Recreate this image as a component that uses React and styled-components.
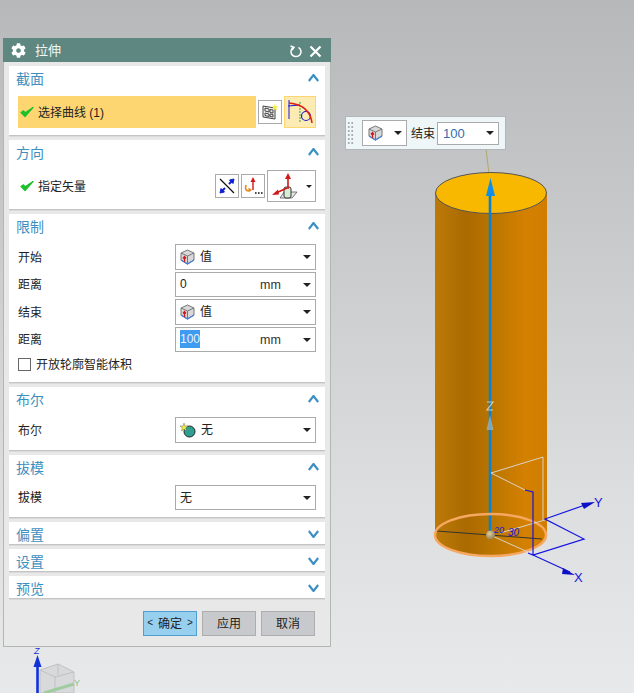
import styled, { createGlobalStyle } from 'styled-components'
import { FaCog } from 'react-icons/fa'

const GlobalStyle = createGlobalStyle`
  html, body {
    margin: 0;
    padding: 0;
  }
  body {
    font-family: 'Liberation Sans', 'Noto Sans CJK SC', sans-serif;
    font-size: 12px;
    color: #222;
  }
`

const Viewport = styled.div`
  position: relative;
  width: 634px;
  height: 693px;
  overflow: hidden;
  padding: 38px 0 0 3px;
  box-sizing: border-box;
  background: linear-gradient(180deg, #b7b8b9 0%, #c9cacb 35%, #dcdddf 70%, #e8e9eb 100%);
`

const Scene = styled.svg`
  position: absolute;
  left: 0;
  top: 0;
`

const Dialog = styled.div`
  position: relative;
  width: 328px;
  height: 609px;
  box-sizing: border-box;
  background: #e8e8e8;
  border: 1px solid #b4b6b6;
  border-top: 0;
  display: flex;
  flex-direction: column;
`

const TitleBar = styled.div`
  height: 24px;
  margin: 0 -1px;
  background: #5d8780;
  color: #fff;
  display: flex;
  align-items: center;
  padding: 0 9px 0 8px;
  gap: 9px;
  font-size: 13px;
  flex-shrink: 0;
`

const TitleText = styled.span`
  flex: 1;
  color: #f2f6f5;
  margin-bottom: 2px;
`

const TitleIcons = styled.div`
  display: flex;
  align-items: center;
  gap: 7px;
  margin-top: 3px;
`

const Sections = styled.div`
  padding: 4px 5px 0 5px;
  display: flex;
  flex-direction: column;
  gap: 4px;
`

const SectionBox = styled.section`
  background: #fff;
  border-bottom: 1px solid #c4c4c4;
  box-shadow: 0 1px 0 #dadada;
  height: ${(p) => p.$height}px;
  box-sizing: border-box;
  display: flex;
  flex-direction: column;
`

const SectionHead = styled.div`
  height: 23px;
  flex-shrink: 0;
  display: flex;
  align-items: center;
  justify-content: space-between;
  padding: 0 6px 0 7px;
  box-sizing: border-box;
  color: #3d8fc0;
  font-size: 14px;
`

const SectionBody = styled.div`
  padding: 7px 9px 0 9px;
  display: flex;
  flex-direction: column;
  gap: 2px;
`

const PickRow = styled.div`
  height: 32px;
  display: flex;
  align-items: center;
  gap: 2px;
`

const PickBar = styled.div`
  flex: 1;
  height: 32px;
  background: #fdd672;
  display: flex;
  align-items: center;
  gap: 4px;
  padding-left: 2px;
`

const PlainLabel = styled.div`
  flex: 1;
  display: flex;
  align-items: center;
  gap: 4px;
  padding-left: 2px;
`

const LabelText = styled.span`
  margin-bottom: 2px;
`

const ToolButton = styled.div`
  width: ${(p) => p.$w || 24}px;
  height: ${(p) => p.$h || 24}px;
  box-sizing: border-box;
  border: 1px solid ${(p) => (p.$active ? '#fdd672' : '#aaa')};
  background: ${(p) => (p.$active ? '#fcecb4' : '#fff')};
  display: flex;
  align-items: center;
  justify-content: center;
  gap: ${(p) => p.$gap || 0}px;
  flex-shrink: 0;
`

const FieldRow = styled.div`
  display: flex;
  align-items: center;
  justify-content: space-between;
  height: ${(p) => p.$h || 26}px;
`

const Select = styled.div`
  width: 141px;
  height: 100%;
  box-sizing: border-box;
  border: 1px solid #aaa;
  background: #fff;
  display: flex;
  align-items: center;
  padding: 0 4px;
  gap: 5px;
  font-size: 12px;
  flex-shrink: 0;
`

const Grow = styled.span`
  flex: 1;
  line-height: 1;
  margin-top: ${(p) => p.$up || 0}px;
`

const Selected = styled.span`
  background: #3f9bf0;
  color: #e8f3ff;
  padding: 2px 0;
`

const Unit = styled.span`
  width: 38px;
  font-size: 12.5px;
  color: #333;
  margin-top: 1px;
`

const Caret = styled.span`
  width: 0;
  height: 0;
  border-left: ${(p) => p.$size || 4}px solid transparent;
  border-right: ${(p) => p.$size || 4}px solid transparent;
  border-top: ${(p) => p.$size || 4}px solid #222;
  flex-shrink: 0;
`

const CheckRow = styled.label`
  display: flex;
  align-items: center;
  gap: 5px;
  margin-top: 1px;
  height: 18px;
`

const CheckBox = styled.span`
  width: 11px;
  height: 11px;
  border: 1px solid #666;
  background: #fff;
`

const Footer = styled.div`
  display: flex;
  justify-content: flex-end;
  gap: 5px;
  padding: 12px 15px 0 0;
`

const DialogButton = styled.div`
  width: 54px;
  height: 25px;
  box-sizing: border-box;
  border: 1px solid ${(p) => (p.$primary ? '#4f9fd0' : '#adadad')};
  background: ${(p) => (p.$primary ? '#97cfee' : '#c8c9cc')};
  display: flex;
  align-items: center;
  justify-content: center;
  gap: 5px;
  padding-bottom: 2px;
  color: #222;
`

const Arrowish = styled.span`
  font-size: 10px;
`

const FloatBar = styled.div`
  position: absolute;
  left: 345px;
  top: 116px;
  width: 161px;
  height: 34px;
  box-sizing: border-box;
  border: 1px solid #b3b6b7;
  background: #eff6f7;
  display: flex;
  align-items: center;
  padding-left: 1px;
  white-space: nowrap;
`

const Grip = styled.div`
  width: 7px;
  height: 25px;
  margin-right: 8px;
  flex-shrink: 0;
  background-image: radial-gradient(circle, #aab0b2 1.2px, transparent 1.3px);
  background-size: 3.5px 4px;
`

const FloatSelect = styled.div`
  width: ${(p) => p.$w}px;
  height: ${(p) => p.$h}px;
  box-sizing: border-box;
  flex-shrink: 0;
  border: 1px solid #aaa;
  background: #fff;
  display: flex;
  align-items: center;
  justify-content: space-between;
  padding: 0 4px 0 5px;
  color: ${(p) => p.$color || '#222'};
  font-size: 13px;
`

const FloatLabel = styled.span`
  margin: 0 2px 2px 4px;
`

const AxisLabel = styled.text`
  font-family: 'Liberation Sans', sans-serif;
  font-size: ${(p) => p.$size}px;
  font-style: ${(p) => (p.$italic ? 'italic' : 'normal')};
  fill: ${(p) => p.$fill};
`

const Tick = () => (
  <svg width="14" height="12" viewBox="0 0 14 12">
    <path d="M1 6.5 L5 10.5 L13 1.5 L5.2 6.8 L3.5 4.8 Z" fill="#1fbf2c" stroke="#1fbf2c" strokeWidth="1.2" strokeLinejoin="round" />
  </svg>
)

const Chevron = ({ down }) => (
  <svg width="11" height="8" viewBox="0 0 11 8">
    <path d={down ? 'M0.8 1 L5.5 7 L10.2 1' : 'M0.8 7 L5.5 1 L10.2 7'} fill="none" stroke="#3a90c2" strokeWidth="2.2" />
  </svg>
)

const ValueCube = () => (
  <svg width="15" height="16" viewBox="0 0 15 16">
    <path d="M7.5 1 L14 4 L14 11 L7.5 15 L1 11 L1 4 Z" fill="#d8d8d8" stroke="#777" strokeWidth="1" />
    <path d="M1 4 L7.5 7 L14 4 M7.5 7 L7.5 15" fill="none" stroke="#777" strokeWidth="1" />
    <path d="M1 11 L7.5 15 L14 11" fill="none" stroke="#4a7fd0" strokeWidth="1.4" />
    <path d="M4.5 13 L4.5 8 M3 9.5 L4.5 7.5 L6 9.5" fill="none" stroke="#d01818" strokeWidth="1.3" />
  </svg>
)

const BoolIcon = () => (
  <svg width="16" height="16" viewBox="0 0 16 16">
    <circle cx="9.5" cy="9.5" r="5.5" fill="#2f9f92" stroke="#222" strokeWidth="1" />
    <path d="M4 1 L5 4 L8 4 L5.8 6 L6.5 9 L4 7.3 L1.5 9 L2.2 6 L0 4 L3 4 Z" fill="#e8e84a" stroke="#555" strokeWidth="0.4" />
  </svg>
)

const CurveIcon = () => (
  <svg width="28" height="28" viewBox="0 0 28 28">
    <path d="M3 2 L3 21 M2 8 L14 7" fill="none" stroke="#1a1ad0" strokeWidth="1" />
    <path d="M14 4 L14 25" fill="none" stroke="#3a9a5a" strokeWidth="1" strokeDasharray="2 1" />
    <circle cx="20" cy="18" r="4.5" fill="none" stroke="#1a1ad0" strokeWidth="1.2" />
    <path d="M3 5 C14 6 24 10 26 25" fill="none" stroke="#e02010" strokeWidth="1.6" />
  </svg>
)

const SketchIcon = () => (
  <svg width="18" height="18" viewBox="0 0 18 18">
    <path d="M2 3 L14 5 L14 16 L2 14 Z" fill="#eee" stroke="#444" strokeWidth="1" />
    <path d="M4 5 L8 6 L8 9 L4 8 Z M9 6.5 L12 7 L12 10 L9 9.5 Z M4 10 L8 11 L8 13.5 L4 12.5 Z M9 11 L12 11.5 L12 14 L9 13.5 Z" fill="none" stroke="#444" strokeWidth="1" />
    <path d="M14 0.5 L15 3 L17.5 3.5 L15.5 5 L16 7.5 L14 6 L12 7.5 L12.5 5 L10.5 3.5 L13 3 Z" fill="#f4ee58" />
  </svg>
)

const ReverseIcon = () => (
  <svg width="18" height="18" viewBox="0 0 18 18">
    <path d="M2 2 L16 16" stroke="#111" strokeWidth="1.2" />
    <path d="M16 2 L11.5 3 L15 6.5 Z M2 16 L6.5 15 L3 11.5 Z" fill="#1020d0" stroke="#1020d0" strokeWidth="1" />
    <path d="M14 4 L11 7 M4 14 L7 11" stroke="#1020d0" strokeWidth="2" />
  </svg>
)

const VectorDialogIcon = () => (
  <svg width="20" height="20" viewBox="0 0 20 20">
    <path d="M10 14 L10 4" stroke="#d01818" strokeWidth="1.4" />
    <path d="M10 1 L7.5 6 L12.5 6 Z" fill="#d01818" />
    <path d="M3 9 C1.5 14 4 16 8 14" fill="none" stroke="#e88a20" strokeWidth="1.6" />
    <path d="M9 14 L5.5 11.5 L5.5 16 Z" fill="#e88a20" />
    <path d="M12 17 h1.6 M15 17 h1.6 M18 17 h1.6" stroke="#111" strokeWidth="1.6" />
  </svg>
)

const VectorIcon = () => (
  <svg width="26" height="28" viewBox="0 0 26 28">
    <path d="M12 20 L25 20 L20 26 L8 26 Z" fill="#e8e8e8" stroke="#555" strokeWidth="0.8" />
    <rect x="12" y="15" width="7" height="11" rx="2" fill="#d8ecd8" stroke="#333" strokeWidth="1" />
    <path d="M16 17 L16 5" stroke="#d01818" strokeWidth="1.6" />
    <path d="M16 1 L13 7 L19 7 Z" fill="#d01818" />
    <path d="M15 16 L4 21" stroke="#d01818" strokeWidth="1.6" />
    <path d="M0 23 L6 17.5 L7 22.5 Z" fill="#d01818" />
  </svg>
)

function Section({ title, height, open = true, children }) {
  return (
    <SectionBox $height={height}>
      <SectionHead>
        <span>{title}</span>
        <Chevron down={!open} />
      </SectionHead>
      {children}
    </SectionBox>
  )
}

function CadScene() {
  return (
    <Scene width="634" height="693" viewBox="0 0 634 693">
      <defs>
        <linearGradient id="body" x1="0" x2="1" y1="0" y2="0">
          <stop offset="0" stopColor="#bb7a08" />
          <stop offset="0.28" stopColor="#ab6a00" />
          <stop offset="0.55" stopColor="#bd7700" />
          <stop offset="0.8" stopColor="#d48000" />
          <stop offset="1" stopColor="#d17d00" />
        </linearGradient>
        <radialGradient id="ball" cx="0.4" cy="0.35" r="0.7">
          <stop offset="0" stopColor="#e0d09c" />
          <stop offset="1" stopColor="#8a7a50" />
        </radialGradient>
      </defs>

      <path d="M486 149 L490 182" stroke="#b3a76a" strokeWidth="1" />
      <path d="M435 193 L435 535 A56 21 0 0 0 547 535 L547 193 Z" fill="url(#body)" />
      <ellipse cx="491" cy="193" rx="55.5" ry="20.5" fill="#f8b800" stroke="#555" strokeWidth="1" />

      <path d="M490 195 L490 533" stroke="#0a80d0" strokeWidth="2.6" />
      <path d="M490.5 178 L486 196 L495 196 Z" fill="#0d8fea" />
      <path d="M490 415 L486.5 430 L493.5 430 Z" fill="#a8c4d8" opacity="0.6" />
      <path d="M487 402 L493 402 L487 410 L493 410" fill="none" stroke="#eadfc8" strokeWidth="1.2" opacity="0.8" />

      <path d="M437 531 L542 539" stroke="#333" strokeWidth="1" />
      <ellipse cx="490.5" cy="535" rx="55.5" ry="21" fill="none" stroke="#f6a860" strokeWidth="2.5" />

      <path d="M491 473 L543 457 L543 520 M491 473 L525 490 M490 535 L528 552 M500 533 L545 520" fill="none" stroke="#d8d4c8" strokeWidth="1" />
      <path d="M525 490 L533 492 L533 555 M528 553 L533 555 L584 539 L545 519 L585 505 M533 555 L570 572" fill="none" stroke="#1414e0" strokeWidth="1.2" />
      <path d="M595 502 L581 503 L584 509 Z" fill="#0d10c8" />
      <path d="M575 575 L563 568 L562 574 Z" fill="#0d10c8" />
      <AxisLabel x="594" y="507" $size={13} $fill="#1414e0">Y</AxisLabel>
      <AxisLabel x="574" y="582" $size={13} $fill="#1414e0">X</AxisLabel>
      <AxisLabel x="494" y="533" $size={9} $italic $fill="#1414e0">20</AxisLabel>
      <AxisLabel x="508" y="536" $size={10} $italic $fill="#1414e0">30</AxisLabel>
      <circle cx="490.5" cy="535" r="4.5" fill="url(#ball)" />

      <path d="M40 670 L58 664 L74 672 L74 693 L40 693 Z" fill="#d8d9da" stroke="#c0c1c2" strokeWidth="1" />
      <path d="M40 670 L55 677 L74 672 M55 677 L55 693 M58 664 L58 675" fill="none" stroke="#c0c1c2" strokeWidth="1" />
      <path d="M37.5 693 L37.5 662" stroke="#1030d8" strokeWidth="2.6" />
      <path d="M37.5 655 L33.5 667 L41.5 667 Z" fill="#1030d8" />
      <AxisLabel x="34" y="654" $size={9} $italic $fill="#1030d8">Z</AxisLabel>
      <path d="M44 693 L74 684" stroke="#9fcca0" strokeWidth="3" />
      <AxisLabel x="74" y="686" $size={9} $fill="#8cc08c">Y</AxisLabel>
    </Scene>
  )
}

export default function App() {
  return (
    <>
      <GlobalStyle />
      <Viewport>
        <CadScene />
        <Dialog>
          <TitleBar>
            <FaCog size={15} />
            <TitleText>拉伸</TitleText>
            <TitleIcons>
              <svg width="13" height="13" viewBox="0 0 13 13">
                <path d="M4 2.6 A5 5 0 1 0 9.5 2.3 M1.5 1 L5 2.4 L3 5" fill="none" stroke="#fff" strokeWidth="1.5" />
              </svg>
              <svg width="13" height="13" viewBox="0 0 13 13">
                <path d="M1.5 1.5 L11.5 11.5 M11.5 1.5 L1.5 11.5" stroke="#fff" strokeWidth="2.2" />
              </svg>
            </TitleIcons>
          </TitleBar>

          <Sections>
            <Section title="截面" height={70}>
              <SectionBody>
                <PickRow>
                  <PickBar>
                    <Tick />
                    <LabelText>选择曲线 (1)</LabelText>
                  </PickBar>
                  <ToolButton>
                    <SketchIcon />
                  </ToolButton>
                  <ToolButton $active $w={32} $h={32}>
                    <CurveIcon />
                  </ToolButton>
                </PickRow>
              </SectionBody>
            </Section>

            <Section title="方向" height={70}>
              <SectionBody>
                <PickRow>
                  <PlainLabel>
                    <Tick />
                    <LabelText>指定矢量</LabelText>
                  </PlainLabel>
                  <ToolButton>
                    <ReverseIcon />
                  </ToolButton>
                  <ToolButton>
                    <VectorDialogIcon />
                  </ToolButton>
                  <ToolButton $w={49} $h={32} $gap={8}>
                    <VectorIcon />
                    <Caret $size={3} />
                  </ToolButton>
                </PickRow>
              </SectionBody>
            </Section>

            <Section title="限制" height={169}>
              <SectionBody>
                <FieldRow>
                  <LabelText>开始</LabelText>
                  <Select>
                    <ValueCube />
                    <Grow>值</Grow>
                    <Caret />
                  </Select>
                </FieldRow>
                <FieldRow $h={25}>
                  <LabelText>距离</LabelText>
                  <Select>
                    <Grow $up={-2}>0</Grow>
                    <Unit>mm</Unit>
                    <Caret />
                  </Select>
                </FieldRow>
                <FieldRow>
                  <LabelText>结束</LabelText>
                  <Select>
                    <ValueCube />
                    <Grow>值</Grow>
                    <Caret />
                  </Select>
                </FieldRow>
                <FieldRow $h={25}>
                  <LabelText>距离</LabelText>
                  <Select>
                    <Grow $up={-2}>
                      <Selected>100</Selected>
                    </Grow>
                    <Unit>mm</Unit>
                    <Caret />
                  </Select>
                </FieldRow>
                <CheckRow>
                  <CheckBox />
                  <LabelText>开放轮廓智能体积</LabelText>
                </CheckRow>
              </SectionBody>
            </Section>

            <Section title="布尔" height={64}>
              <SectionBody>
                <FieldRow>
                  <LabelText>布尔</LabelText>
                  <Select>
                    <BoolIcon />
                    <Grow>无</Grow>
                    <Caret />
                  </Select>
                </FieldRow>
              </SectionBody>
            </Section>

            <Section title="拔模" height={63}>
              <SectionBody>
                <FieldRow $h={25}>
                  <LabelText>拔模</LabelText>
                  <Select>
                    <Grow>无</Grow>
                    <Caret />
                  </Select>
                </FieldRow>
              </SectionBody>
            </Section>

            <Section title="偏置" height={23} open={false} />
            <Section title="设置" height={23} open={false} />
            <Section title="预览" height={23} open={false} />
          </Sections>

          <Footer>
            <DialogButton $primary>
              <Arrowish>&lt;</Arrowish>
              确定
              <Arrowish>&gt;</Arrowish>
            </DialogButton>
            <DialogButton>应用</DialogButton>
            <DialogButton>取消</DialogButton>
          </Footer>
        </Dialog>

        <FloatBar>
          <Grip />
          <FloatSelect $w={45} $h={26}>
            <ValueCube />
            <Caret />
          </FloatSelect>
          <FloatLabel>结束</FloatLabel>
          <FloatSelect $w={62} $h={23} $color="#2d6fb0">
            100
            <Caret />
          </FloatSelect>
        </FloatBar>
      </Viewport>
    </>
  )
}
